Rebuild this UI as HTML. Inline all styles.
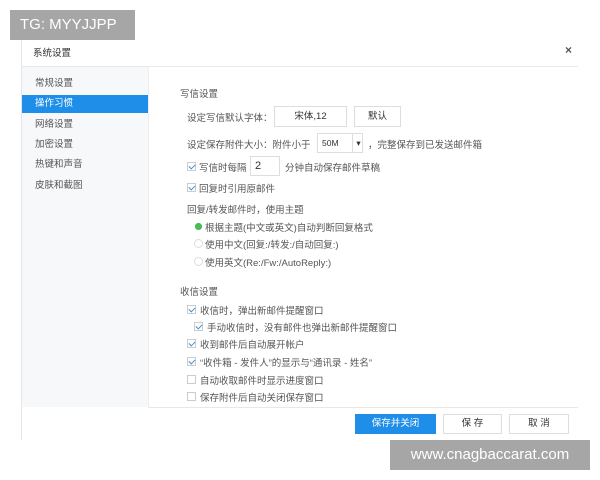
<html><head><style>
body{margin:0;width:600px;height:480px;background:#fff;position:relative;font-family:"Liberation Sans","Noto Sans CJK SC",sans-serif;font-size:9.5px;color:#555;overflow:hidden}
.a{position:absolute;white-space:nowrap}
.cb{position:absolute;width:9px;height:9px;border:1px solid #ccc;background:#fff;box-sizing:border-box}
.cb.on::after{content:"";position:absolute;left:2px;top:0px;width:3px;height:5px;border:solid #3a8ed8;border-width:0 1.5px 1.5px 0;transform:rotate(45deg)}
.rd{position:absolute;width:9px;height:9px;border-radius:50%;border:1px solid #ddd;box-sizing:border-box}
.box{position:absolute;border:1px solid #ddd;background:#fff;box-sizing:border-box;text-align:center}
</style></head><body>
<div class="a" style="left:21px;top:38px;width:557px;height:402px;border-left:1px solid #e5e5e5;"></div>
<div class="a" style="left:33px;top:45px;font-size:9.5px;color:#333">系统设置</div>
<div class="a" style="left:565px;top:43px;font-size:12px;color:#555;font-weight:bold">×</div>
<div class="a" style="left:21px;top:66px;width:557px;height:1px;background:#e8e8e8"></div>
<div class="a" style="left:22px;top:67px;width:126px;height:340px;background:#f7f8fa;border-right:1px solid #eee"></div>
<div class="a" style="left:22px;top:95px;width:126px;height:18px;background:#1e8ee8"></div>
<div class="a" style="left:35px;top:78px;line-height:12px">常规设置</div>
<div class="a" style="left:35px;top:98px;line-height:12px;color:#fff">操作习惯</div>
<div class="a" style="left:35px;top:119px;line-height:12px">网络设置</div>
<div class="a" style="left:35px;top:139px;line-height:12px">加密设置</div>
<div class="a" style="left:35px;top:159px;line-height:12px">热键和声音</div>
<div class="a" style="left:35px;top:180px;line-height:12px">皮肤和截图</div>

<div class="a" style="left:180px;top:86px">写信设置</div>
<div class="a" style="left:187px;top:110px">设定写信默认字体：</div>
<div class="box" style="left:274px;top:106px;width:73px;height:21px;line-height:19px;color:#333">宋体,12</div>
<div class="box" style="left:354px;top:106px;width:47px;height:21px;line-height:19px;color:#333">默认</div>
<div class="a" style="left:187px;top:137px">设定保存附件大小：附件小于</div>
<div class="box" style="left:317px;top:133px;width:46px;height:20px;line-height:18px;text-align:left;padding-left:4px;color:#333;font-size:8.5px">50M<span style="position:absolute;left:34px;top:0;height:18px;border-left:1px solid #ddd;width:11px;text-align:center">▾</span></div>
<div class="a" style="left:368px;top:137px">，完整保存到已发送邮件箱</div>
<div class="cb on" style="left:187px;top:162px"></div>
<div class="a" style="left:199px;top:160px">写信时每隔</div>
<div class="box" style="left:250px;top:156px;width:30px;height:20px;line-height:18px;text-align:left;padding-left:4px;color:#333;font-size:11px">2</div>
<div class="a" style="left:285px;top:160px">分钟自动保存邮件草稿</div>
<div class="cb on" style="left:187px;top:183px"></div>
<div class="a" style="left:199px;top:181px">回复时引用原邮件</div>
<div class="a" style="left:187px;top:202px">回复/转发邮件时，使用主题</div>
<div class="rd" style="left:194px;top:222px;background:#4cba5a;border-color:#4cba5a;transform:scale(.8)"></div>
<div class="a" style="left:205px;top:220px">根据主题(中文或英文)自动判断回复格式</div>
<div class="rd" style="left:194px;top:239px"></div>
<div class="a" style="left:205px;top:237px">使用中文(回复:/转发:/自动回复:)</div>
<div class="rd" style="left:194px;top:257px"></div>
<div class="a" style="left:205px;top:255px">使用英文(Re:/Fw:/AutoReply:)</div>

<div class="a" style="left:180px;top:284px">收信设置</div>
<div class="cb on" style="left:187px;top:305px"></div><div class="a" style="left:200px;top:303px">收信时，弹出新邮件提醒窗口</div>
<div class="cb on" style="left:194px;top:322px"></div><div class="a" style="left:207px;top:320px">手动收信时，没有邮件也弹出新邮件提醒窗口</div>
<div class="cb on" style="left:187px;top:339px"></div><div class="a" style="left:200px;top:337px">收到邮件后自动展开帐户</div>
<div class="cb on" style="left:187px;top:357px"></div><div class="a" style="left:200px;top:355px">“收件箱 - 发件人”的显示与“通讯录 - 姓名”</div>
<div class="cb" style="left:187px;top:375px"></div><div class="a" style="left:200px;top:373px">自动收取邮件时显示进度窗口</div>
<div class="cb" style="left:187px;top:392px"></div><div class="a" style="left:200px;top:390px">保存附件后自动关闭保存窗口</div>

<div class="a" style="left:148px;top:407px;width:430px;height:1px;background:#e8e8e8"></div>
<div class="a" style="left:355px;top:414px;width:81px;height:20px;background:#1e8ee8;color:#fff;text-align:center;line-height:20px">保存并关闭</div>
<div class="box" style="left:443px;top:414px;width:59px;height:20px;line-height:18px;color:#333">保 存</div>
<div class="box" style="left:509px;top:414px;width:60px;height:20px;line-height:18px;color:#333">取 消</div>

<div class="a" style="left:10px;top:10px;width:125px;height:30px;background:#a6a6a6;color:#fff;font-size:15px;line-height:30px;text-indent:10px">TG: MYYJJPP</div>
<div class="a" style="left:390px;top:440px;width:200px;height:30px;background:#a6a6a6;color:#fff;font-size:15px;line-height:30px;text-align:center">www.cnagbaccarat.com</div>
</body></html>
